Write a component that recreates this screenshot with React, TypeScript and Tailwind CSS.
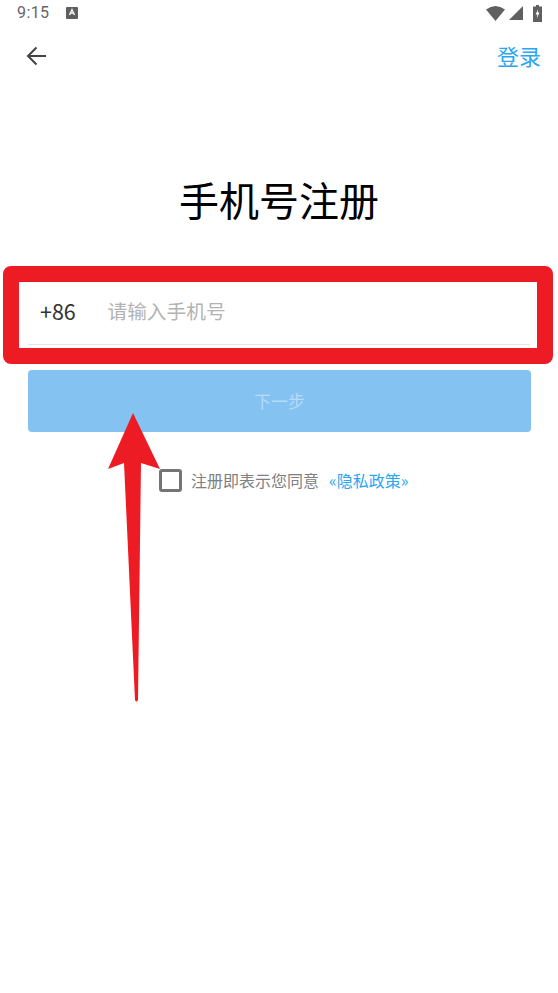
const cjk = { fontFamily: '"Noto Sans CJK SC", "Noto Sans", sans-serif' };

export default function App() {
  return (
    <div className="relative w-[558px] h-[993px] bg-white overflow-hidden" style={cjk}>
      {/* status bar */}
      <div className="h-[26px] flex items-center pl-[17px] pr-[16px] text-[#666666]">
        <span className="text-[16px] leading-none tracking-[0.4px]" style={{ fontFamily: 'Roboto, sans-serif' }}>9:15</span>
        <svg className="ml-[17px]" width="12" height="12" viewBox="0 0 12 12">
          <rect width="12" height="12" rx="1" fill="#5f5f5f" />
          <path d="M3.5 8 L6 2.5 L8.5 8 M4.4 6.2 H7.6" stroke="#fff" strokeWidth="1.3" fill="none" />
        </svg>
        <div className="ml-auto flex items-center gap-[4px]">
          <svg width="19" height="16" viewBox="0 0 19 16"><path d="M0 4.5 Q9.5 -2.5 19 4.5 L9.5 16 Z" fill="#606060" /></svg>
          <svg width="14" height="14" viewBox="0 0 14 14"><path d="M14 0 V14 H0 Z" fill="#606060" /></svg>
          <svg className="ml-[6px]" width="9" height="17" viewBox="0 0 9 17">
            <path d="M3 0 H6 V1.5 H9 V17 H0 V1.5 H3 Z" fill="#606060" />
            <path d="M5.2 4 L2.6 9.4 H4.4 L3.8 13.5 L6.5 7.6 H4.7 Z" fill="#fff" />
          </svg>
        </div>
      </div>

      {/* nav */}
      <div className="h-[60px] flex items-center justify-between pl-[24px] pr-[17px]">
        <svg width="24" height="24" viewBox="0 0 24 24" fill="none" stroke="#444444" strokeWidth="2">
          <path d="M22 12 H4 M12.5 3.5 L4 12 L12.5 20.5" />
        </svg>
        <span className="text-[22px] leading-none text-[#2ba6f3] -mt-[2px]">登录</span>
      </div>

      {/* title */}
      <h1 className="mt-[85px] text-center text-[40px] leading-[56px] font-normal text-black">手机号注册</h1>

      {/* phone row */}
      <div className="mt-[53px] mx-[28px] h-[65px] flex items-center border-b border-[#e5e5e5] pb-[2px]">
        <span className="ml-[12px] w-[67.5px] text-[21.5px] text-[#333333]">+86</span>
        <span className="text-[19.7px] text-[#b3b3b3]">请输入手机号</span>
      </div>

      {/* button */}
      <div className="mt-[25px] ml-[28px] w-[503px] h-[62px] rounded-[4px] bg-[#84c2f2] flex items-center justify-center text-[17px] text-[#b5dbf7]">
        下一步
      </div>

      {/* agreement */}
      <div className="mt-[37px] ml-[159px] flex items-center">
        <div className="w-[23px] h-[23px] rounded-[3px] border-[3px] border-[#757575]" />
        <span className="ml-[9px] -mt-[2px] text-[16px] text-[#808080]">注册即表示您同意</span>
        <span className="ml-[10px] -mt-[2px] text-[16px] text-[#2ba6f3]">«隐私政策»</span>
      </div>

      {/* annotations */}
      <div className="absolute left-[3px] top-[266px] w-[550px] h-[98px] rounded-[8px] border-[16px] border-[#ed1c24]" />
      <svg className="absolute left-[100px] top-[405px]" width="70" height="300" viewBox="0 0 70 300">
        <path d="M33 8 L60 64 L41 58 L38 295 Q36.5 298 35 295 L24 58 L8 64 Z" fill="#ed1c24" />
      </svg>
    </div>
  );
}
